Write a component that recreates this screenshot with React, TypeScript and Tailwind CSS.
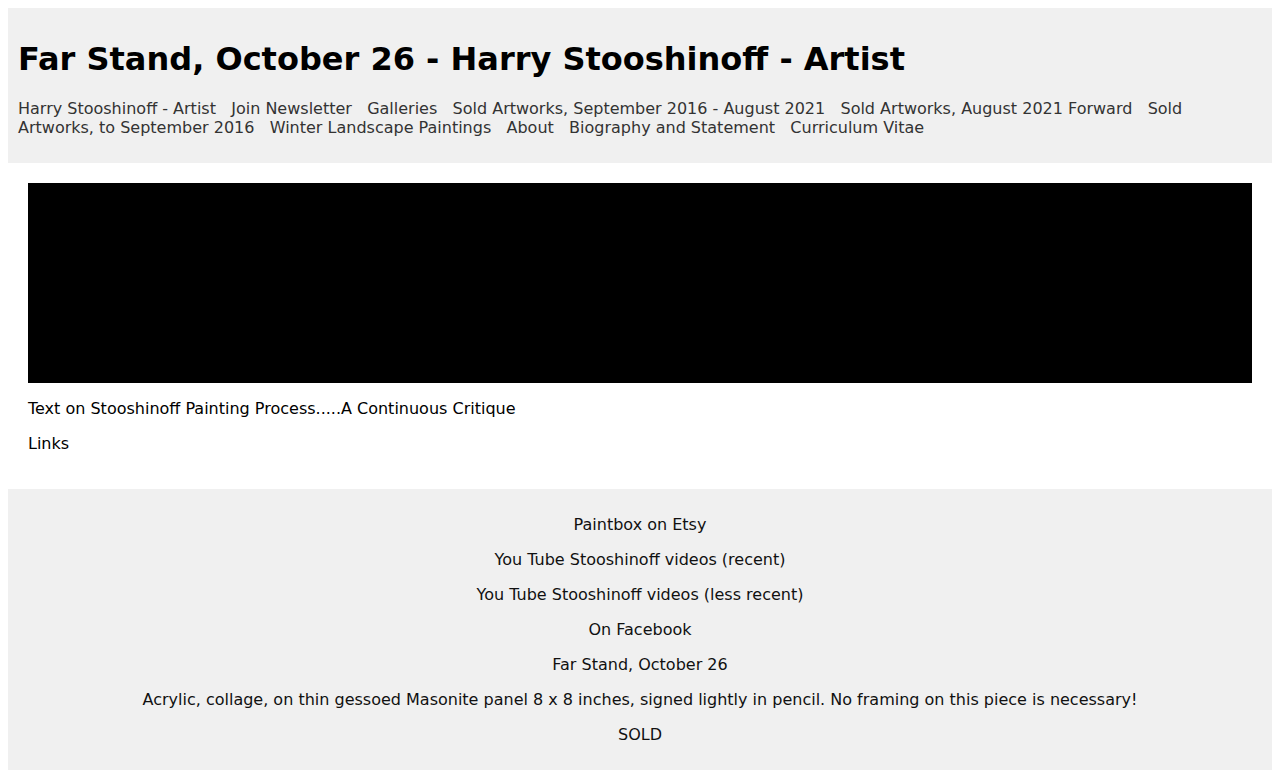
const navLinks = [
    'Harry Stooshinoff - Artist',
    'Join Newsletter',
    'Galleries',
    'Sold Artworks, September 2016 - August 2021',
    'Sold Artworks, August 2021 Forward',
    'Sold Artworks, to September 2016',
    'Winter Landscape Paintings',
    'About',
    'Biography and Statement',
    'Curriculum Vitae',
]

const footerLines = [
    'Paintbox on Etsy',
    'You Tube Stooshinoff videos (recent)',
    'You Tube Stooshinoff videos (less recent)',
    'On Facebook',
    'Far Stand, October 26',
    'Acrylic, collage, on thin gessoed Masonite panel 8 x 8 inches, signed lightly in pencil. No framing on this piece is necessary!',
    'SOLD',
]

const App = () => {
    return (
        <div className="m-2 font-['DejaVu_Sans',sans-serif] text-base text-black bg-white">
            <header className="bg-[#f0f0f0] p-[10px] flow-root">
                <h1 className="text-[32px] font-bold leading-[38px] my-[21.5px]">
                    Far Stand, October 26 - Harry Stooshinoff - Artist
                </h1>
                <nav className="mb-4 leading-[19px] text-[#333]">
                    {navLinks.map((l, i) => (
                        <span key={i}>
                            <a className="cursor-pointer">{l}</a>
                            {i < navLinks.length - 1 ? '\u00a0\u00a0 ' : ''}
                        </span>
                    ))}
                </nav>
            </header>

            <main className="p-5 flow-root">
                <div className="h-[200px] bg-black" />
                <p className="my-4 leading-[19px]">Text on Stooshinoff Painting Process.....A Continuous Critique</p>
                <p className="my-4 leading-[19px]">Links</p>
            </main>

            <footer className="bg-[#f0f0f0] p-[10px] flow-root text-center text-[#111]">
                {footerLines.map((t, i) => (
                    <p key={i} className="my-4 leading-[19px]">{t}</p>
                ))}
            </footer>
        </div>
    )
}

export default App
